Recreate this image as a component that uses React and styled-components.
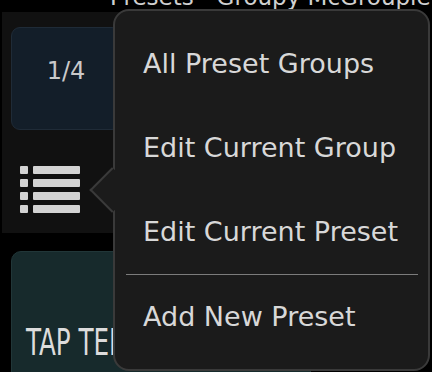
import React from "react";
import styled, { createGlobalStyle } from "styled-components";

const GlobalStyle = createGlobalStyle`
  html, body {
    margin: 0;
    padding: 0;
    background: #000;
    overflow: hidden;
  }
  body {
    width: 432px;
    height: 372px;
    font-family: "DejaVu Sans", Verdana, sans-serif;
    color: #d6d6d6;
  }
`;

const Screen = styled.div`
  position: relative;
  width: 432px;
  height: 372px;
  overflow: hidden;
  background: #000;
`;

const Header = styled.div`
  height: 12px;
  display: flex;
  align-items: flex-end;
  padding-left: 110px;
  font-size: 23px;
  line-height: 30px;
  color: #d0d0d0;
  white-space: nowrap;
`;

const Panel = styled.div`
  margin-left: 2px;
  width: 220px;
  height: 221px;
  box-sizing: border-box;
  padding: 15px 9px 0;
  background: #111111;
  display: flex;
  flex-direction: column;
`;

const PageButton = styled.div`
  width: 110px;
  height: 103px;
  box-sizing: border-box;
  border-radius: 9px;
  border: 1px solid #1f2b37;
  background: #131e29;
  display: flex;
  align-items: center;
  justify-content: center;
  padding-bottom: 15px;
  font-size: 24px;
  color: #c9c9c9;
`;

const ListIcon = styled.svg`
  display: block;
  margin: 36px 0 0 9px;
`;

const TapButton = styled.div`
  margin: 18px 0 0 11px;
  width: 300px;
  height: 160px;
  box-sizing: border-box;
  border-radius: 10px;
  border: 1px solid #213638;
  background: #172a2c;
  padding: 72px 0 0 14px;
`;

const TapLabel = styled.div`
  font-family: "DejaVu Sans Condensed", "DejaVu Sans", sans-serif;
  font-size: 37px;
  line-height: 37px;
  color: #dcdcdc;
  white-space: nowrap;
  transform: scaleX(0.74);
  transform-origin: left center;
`;

const Menu = styled.div`
  position: absolute;
  left: 113px;
  top: 9px;
  width: 317px;
  box-sizing: border-box;
  border: 2px solid #3a3a3a;
  border-radius: 16px;
  background: #1b1b1b;
  padding: 11px 10px 10px 11px;
`;

const Arrow = styled.div`
  position: absolute;
  left: -19px;
  top: 163px;
  width: 32px;
  height: 32px;
  box-sizing: border-box;
  background: #1b1b1b;
  border-left: 2px solid #3a3a3a;
  border-bottom: 2px solid #3a3a3a;
  transform: rotate(45deg);
`;

const MenuItem = styled.div`
  position: relative;
  height: 84px;
  line-height: 84px;
  padding-left: 17px;
  font-size: 27px;
  color: #d8d8d8;
  white-space: nowrap;
`;

const Divider = styled.div`
  height: 1px;
  background: #7c7c7c;
`;

const rows = [0, 13, 26, 39];

export default function App() {
  return (
    <Screen>
      <GlobalStyle />
      <Header>Presets - Groupy McGroupie</Header>
      <Panel>
        <PageButton>1/4</PageButton>
        <ListIcon width="60" height="47" viewBox="0 0 60 47">
          {rows.map((y) => (
            <g key={y} fill="#d3d3d3">
              <rect x="0" y={y} width="8" height="8" rx="1" />
              <rect x="13" y={y} width="47" height="8" rx="1" />
            </g>
          ))}
        </ListIcon>
      </Panel>
      <TapButton>
        <TapLabel>TAP TEMPO</TapLabel>
      </TapButton>
      <Menu>
        <Arrow />
        <MenuItem>All Preset Groups</MenuItem>
        <MenuItem>Edit Current Group</MenuItem>
        <MenuItem>Edit Current Preset</MenuItem>
        <Divider />
        <MenuItem>Add New Preset</MenuItem>
      </Menu>
    </Screen>
  );
}
